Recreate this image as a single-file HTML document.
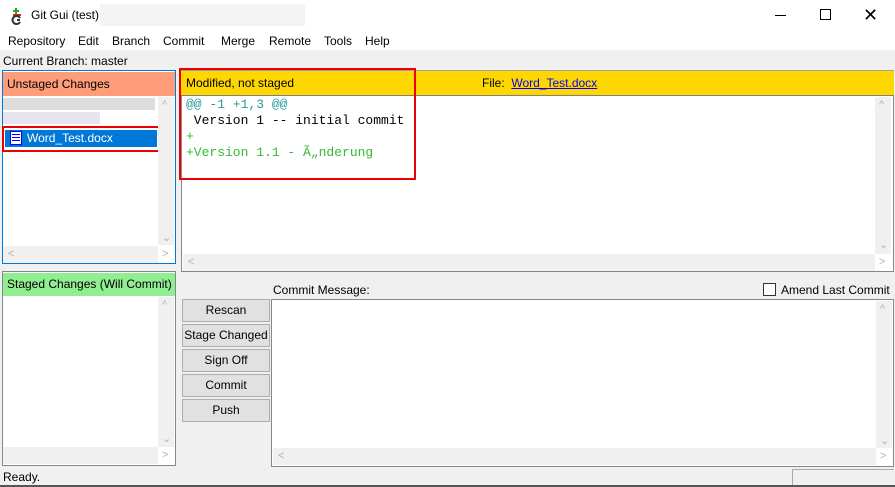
<!DOCTYPE html>
<html><head><meta charset="utf-8"><style>
*{box-sizing:border-box;margin:0;padding:0}
body{width:895px;height:487px;background:#f0f0f0;font-family:"Liberation Sans",sans-serif;font-size:12px;color:#000;position:relative;overflow:hidden}
.a{position:absolute}
.sb{background:#f0f0f0;position:absolute}
.ar{position:absolute;color:#b0b0b0;font-size:11px;line-height:11px}
.btn{position:absolute;left:182px;width:88px;height:23px;background:#e1e1e1;border:1px solid #adadad;text-align:center;line-height:21px}
.mono{font-family:"Liberation Mono",monospace;font-size:13px;line-height:16px;white-space:pre}
</style></head><body>
<div class="a" style="left:0;top:0;width:895px;height:50px;background:#fff"></div>
<div class="a" style="left:10px;top:7px;width:14px;height:18px">
<svg width="14" height="18"><path d="M6 1v6M3 4h6" stroke="#2a2" stroke-width="2"/><path d="M3 8h8" stroke="#d22" stroke-width="2"/><path d="M10 11a4 4 0 1 0 0 4M10 13h-3" stroke="#333" stroke-width="2" fill="none"/></svg></div>
<div class="a" style="left:31px;top:8px;font-size:12px">Git Gui (test)</div>
<div class="a" style="left:100px;top:4px;width:205px;height:22px;background:#f4f4f4"></div>
<div class="a" style="left:775px;top:15px;width:11px;height:1px;background:#000"></div>
<div class="a" style="left:820px;top:9px;width:11px;height:11px;border:1px solid #000"></div>
<div class="a" style="left:863px;top:6px;font-size:18px;line-height:18px">✕</div>
<div class="a" style="left:8px;top:34px">Repository</div>
<div class="a" style="left:78px;top:34px">Edit</div>
<div class="a" style="left:112px;top:34px">Branch</div>
<div class="a" style="left:163px;top:34px">Commit</div>
<div class="a" style="left:221px;top:34px">Merge</div>
<div class="a" style="left:269px;top:34px">Remote</div>
<div class="a" style="left:324px;top:34px">Tools</div>
<div class="a" style="left:365px;top:34px">Help</div>
<div class="a" style="left:3px;top:54px">Current Branch: master</div>

<!-- unstaged -->
<div class="a" style="left:2px;top:70px;width:174px;height:194px;border:1px solid #0078d7;background:#fff"></div>
<div class="a" style="left:3px;top:72px;width:172px;height:24px;background:#ff9d7a;line-height:24px;padding-left:4px">Unstaged Changes</div>
<div class="a" style="left:3px;top:98px;width:152px;height:12px;background:#ddd"></div>
<div class="a" style="left:3px;top:112px;width:97px;height:12px;background:#e6e4ee"></div>
<div class="a" style="left:5px;top:130px;width:152px;height:17px;background:#0078d7;color:#fff;line-height:17px;padding-left:22px">Word_Test.docx</div>
<div class="a" style="left:10px;top:131px;width:12px;height:14px;background:#fff;border:1px solid #00f"><div style="margin:2px 1px;height:1px;border-top:1px solid #00f;box-shadow:0 3px #00f,0 6px #00f"></div></div>
<div class="a" style="left:2px;top:126px;width:159px;height:26px;border:2px solid #e00"></div>
<div class="sb" style="left:158px;top:97px;width:16px;height:148px"></div>
<div class="ar" style="left:162px;top:100px">^</div><div class="ar" style="left:162px;top:233px">⌄</div>
<div class="sb" style="left:3px;top:246px;width:155px;height:17px"></div>
<div class="ar" style="left:8px;top:249px">&lt;</div><div class="ar" style="left:162px;top:249px">&gt;</div>

<!-- staged -->
<div class="a" style="left:2px;top:271px;width:174px;height:195px;border:1px solid #828790;background:#fff"></div>
<div class="a" style="left:3px;top:273px;width:172px;height:23px;background:#90ee90;line-height:23px;padding-left:4px">Staged Changes (Will Commit)</div>
<div class="sb" style="left:158px;top:297px;width:16px;height:150px"></div>
<div class="ar" style="left:162px;top:300px">^</div><div class="ar" style="left:162px;top:434px">⌄</div>
<div class="sb" style="left:3px;top:447px;width:155px;height:17px"></div>
<div class="ar" style="left:162px;top:450px">&gt;</div>

<!-- diff -->
<div class="a" style="left:181px;top:70px;width:713px;height:26px;background:#ffd700;border-top:1px solid #a0a0a0;border-bottom:1px solid #808080"></div>
<div class="a" style="left:186px;top:76px">Modified, not staged</div>
<div class="a" style="left:482px;top:76px">File:&nbsp; <span style="color:#00f;text-decoration:underline">Word_Test.docx</span></div>
<div class="a" style="left:181px;top:96px;width:713px;height:176px;border:1px solid #828790;border-top:none;background:#fff"></div>
<div class="a mono" style="left:186px;top:97px;color:#2a9a9a">@@ -1 +1,3 @@</div>
<div class="a mono" style="left:186px;top:113px"> Version 1 -- initial commit</div>
<div class="a mono" style="left:186px;top:129px;color:#3b3">+</div>
<div class="a mono" style="left:186px;top:145px;color:#3b3">+Version 1.1 - Ã„nderung</div>
<div class="sb" style="left:875px;top:97px;width:16px;height:157px"></div>
<div class="ar" style="left:879px;top:100px">^</div><div class="ar" style="left:879px;top:240px">⌄</div>
<div class="sb" style="left:183px;top:254px;width:692px;height:17px"></div>
<div class="ar" style="left:188px;top:257px">&lt;</div><div class="ar" style="left:879px;top:257px">&gt;</div>
<div class="a" style="left:179px;top:68px;width:237px;height:112px;border:2px solid #e00"></div>

<!-- commit -->
<div class="a" style="left:273px;top:283px">Commit Message:</div>
<div class="a" style="left:763px;top:283px;width:13px;height:13px;border:1px solid #333;background:#fff"></div>
<div class="a" style="left:781px;top:283px">Amend Last Commit</div>
<div class="btn" style="top:299px">Rescan</div>
<div class="btn" style="top:324px">Stage Changed</div>
<div class="btn" style="top:349px">Sign Off</div>
<div class="btn" style="top:374px">Commit</div>
<div class="btn" style="top:399px">Push</div>
<div class="a" style="left:271px;top:299px;width:623px;height:168px;border:1px solid #828790;background:#fff"></div>
<div class="sb" style="left:876px;top:301px;width:16px;height:147px"></div>
<div class="ar" style="left:880px;top:304px">^</div><div class="ar" style="left:880px;top:436px">⌄</div>
<div class="sb" style="left:273px;top:448px;width:603px;height:17px"></div>
<div class="ar" style="left:278px;top:451px">&lt;</div><div class="ar" style="left:880px;top:451px">&gt;</div>

<div class="a" style="left:3px;top:470px">Ready.</div>
<div class="a" style="left:792px;top:469px;width:102px;height:16px;border:1px solid #aaa;border-right:none;border-bottom:none"></div>
<div class="a" style="left:0;top:485px;width:895px;height:2px;background:#555"></div>
</body></html>
